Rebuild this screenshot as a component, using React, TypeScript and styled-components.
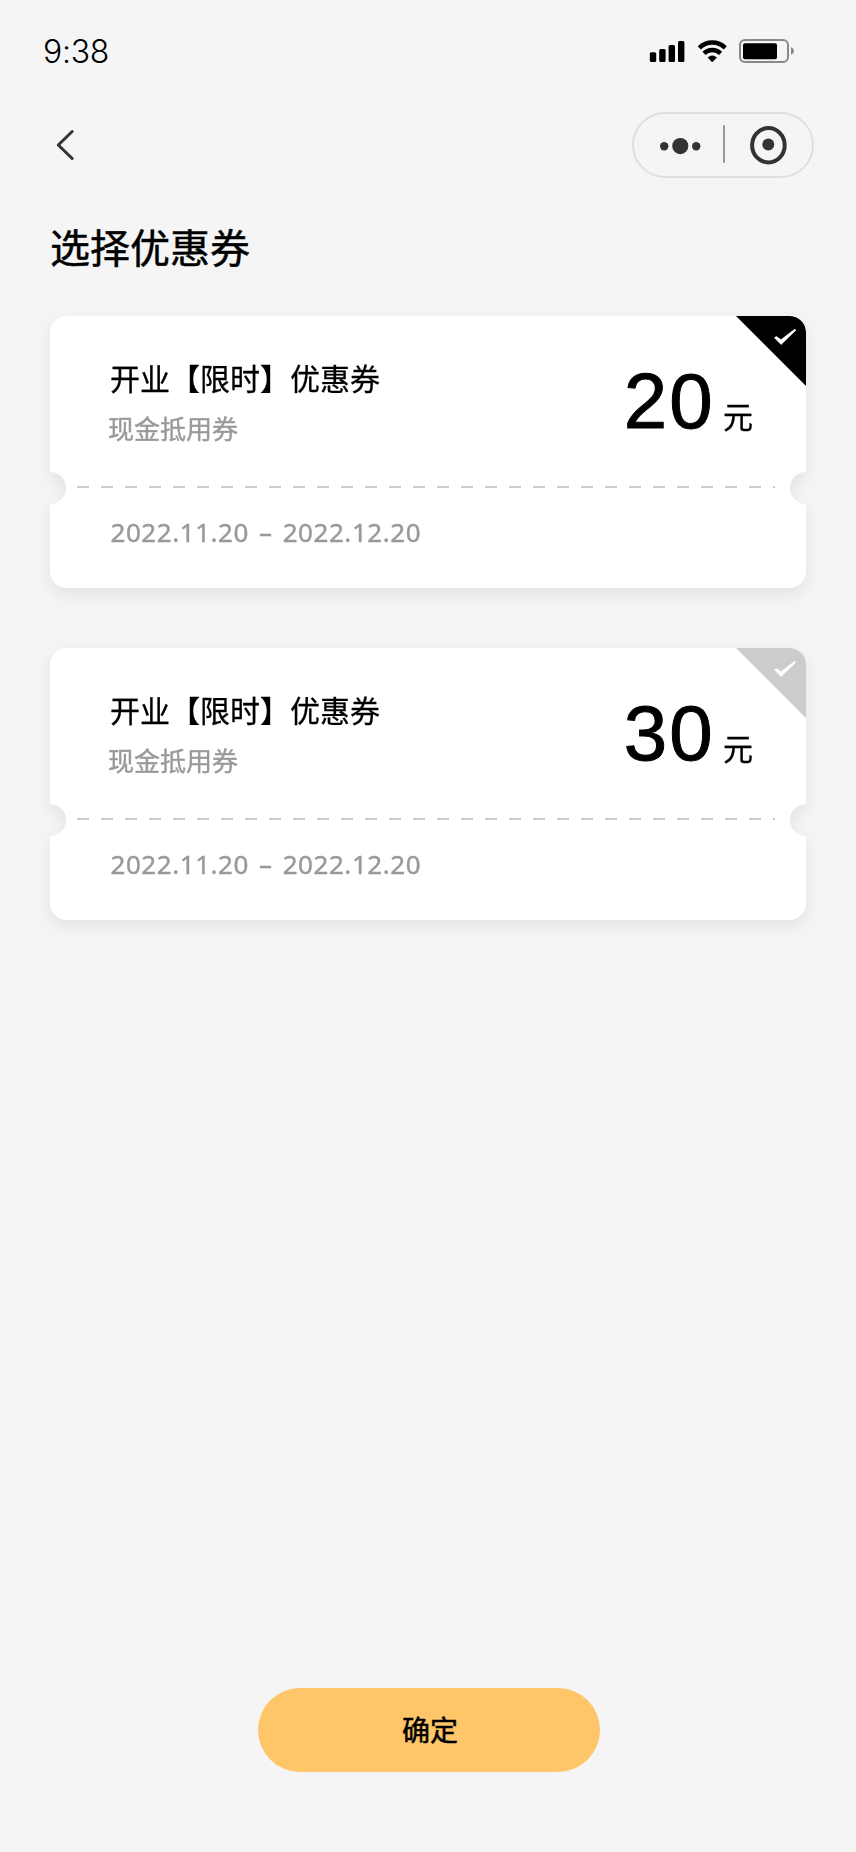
import React from "react";
import styled, { createGlobalStyle } from "styled-components";

const GlobalStyle = createGlobalStyle`
  * { box-sizing: border-box; }
  body { margin: 0; background: #f5f5f5; }
`;

const Screen = styled.main`
  display: flex;
  flex-direction: column;
  width: 856px;
  height: 1852px;
  background: #f5f5f5;
  color: #000;
  font-family: "Noto Sans CJK SC", sans-serif;
`;

const StatusBar = styled.header`
  display: flex;
  align-items: center;
  justify-content: space-between;
  height: 102px;
  padding: 0 61px 0 43px;
`;

const Clock = styled.span`
  padding-top: 1px;
  font: 300 32px/40px Inter, sans-serif;
  letter-spacing: -0.3px;
`;

const StatusIcons = styled.svg`
  display: block;
  width: 146px;
  height: 26px;
`;

const NavBar = styled.nav`
  display: flex;
  align-items: center;
  justify-content: space-between;
  height: 66px;
  margin-top: 10px;
  padding: 0 42px 0 50px;
`;

const BackButton = styled.button`
  display: grid;
  place-items: center;
  width: 32px;
  height: 40px;
  padding: 0;
  border: 0;
  background: none;
`;

const Capsule = styled.div`
  display: flex;
  align-items: center;
  width: 182px;
  height: 66px;
  border: 2px solid #dfdfdf;
  border-radius: 33px;
`;

const CapsuleIcons = styled.svg`
  display: block;
  width: 178px;
  height: 62px;
`;

const Heading = styled.h1`
  margin: 39px 0 0 50px;
  font-size: 40px;
  line-height: 58px;
  font-weight: 400;
  -webkit-text-stroke: 0.5px #000;
`;

const CouponList = styled.section`
  display: flex;
  flex-direction: column;
  gap: 60px;
  margin-top: 41px;
  padding: 0 50px;
`;

const Coupon = styled.article`
  filter: drop-shadow(0 6px 8px rgba(0, 0, 0, 0.08));
`;

const CouponFace = styled.div`
  position: relative;
  display: flex;
  flex-direction: column;
  height: 272px;
  border-radius: 16px;
  overflow: hidden;
  background: #fff;
  mask: radial-gradient(circle at 0 172px, transparent 15.5px, #000 16.5px) left / 50% 100% no-repeat,
    radial-gradient(circle at 100% 172px, transparent 15.5px, #000 16.5px) right / 50% 100% no-repeat;
`;

const CouponTop = styled.div`
  display: flex;
  justify-content: space-between;
  height: 170px;
  padding: 39px 53px 0 58px;
`;

const CouponTitle = styled.h2`
  margin: 0 0 0 2px;
  font-size: 30px;
  line-height: 44px;
  font-weight: 400;
  -webkit-text-stroke: 0.3px #000;
`;

const CouponKind = styled.p`
  margin: 10px 0 0;
  font-size: 26px;
  line-height: 38px;
  color: #999;
  -webkit-text-stroke: 0.4px #999;
`;

const Price = styled.div`
  display: flex;
  align-items: baseline;
  gap: 8px;
  height: 90px;
  padding-top: 1px;
`;

const Amount = styled.strong`
  font: 400 78px/90px "Liberation Sans", sans-serif;
  letter-spacing: 2.3px;
  -webkit-text-stroke: 1px #000;
`;

const Unit = styled.span`
  font-size: 30px;
  line-height: 44px;
  -webkit-text-stroke: 0.3px #000;
`;

const Divider = styled.div`
  height: 2px;
  margin: 0 31px 0 27px;
  background: repeating-linear-gradient(90deg, #ccc 0 12px, transparent 12px 24px);
`;

const Validity = styled.time`
  margin: 25px 0 0 60.5px;
  font: 400 26px/38px "Noto Sans", sans-serif;
  letter-spacing: 0.55px;
  word-spacing: 2.8px;
  color: #999;
  -webkit-text-stroke: 0.4px #999;
`;

const Corner = styled.svg<{ $selected: boolean }>`
  position: absolute;
  top: 0;
  right: 0;
  width: 70px;
  height: 70px;
  color: ${(p) => (p.$selected ? "#000" : "#ccc")};
`;

const ConfirmButton = styled.button`
  align-self: center;
  width: 342px;
  height: 84px;
  margin: auto 0 80px 2px;
  padding: 0 0 2px 2px;
  border: 0;
  border-radius: 42px;
  background: #ffc569;
  color: #000;
  font: 400 28px/40px "Noto Sans CJK SC", sans-serif;
  -webkit-text-stroke: 0.5px #000;
`;

const coupons = [
  { amount: 20, selected: true },
  { amount: 30, selected: false },
];

export default function App() {
  return (
    <Screen>
      <GlobalStyle />
      <StatusBar>
        <Clock>9:38</Clock>
        <StatusIcons viewBox="0 0 146 26">
          <rect x="0.8" y="14.2" width="6.4" height="9.8" rx="1.5" />
          <rect x="10.2" y="11" width="6.4" height="13" rx="1.5" />
          <rect x="19.6" y="7" width="6.4" height="17" rx="1.5" />
          <rect x="29" y="3" width="6.4" height="21" rx="1.5" />
          <g fill="none" stroke="#000" strokeWidth="4.4">
            <path d="M50.3 9.9a18.5 18.5 0 0 1 26 0" />
            <path d="M55 15.4a12 12 0 0 1 16.6 0" />
          </g>
          <path d="M59 19.6a6.8 6.8 0 0 1 8.6 0L63.3 24Z" stroke="#000" strokeWidth="0.6" strokeLinejoin="round" />
          <rect x="91" y="2" width="48" height="22" rx="5" fill="none" stroke="#888" strokeWidth="2" />
          <rect x="94" y="5.2" width="34" height="16" rx="2" />
          <path d="M142 9q3 1.5 3 4t-3 4Z" fill="#888" />
        </StatusIcons>
      </StatusBar>
      <NavBar>
        <BackButton aria-label="返回">
          <svg width="32" height="40" viewBox="0 0 32 40" fill="none" stroke="#333" strokeWidth="3" strokeLinecap="round" strokeLinejoin="round">
            <path d="M22.2 6.5 8.3 20l13.9 13.5" />
          </svg>
        </BackButton>
        <Capsule>
          <CapsuleIcons viewBox="0 0 178 62" fill="#333">
            <circle cx="30.2" cy="32.3" r="4.2" />
            <circle cx="46.3" cy="32.1" r="8.1" />
            <circle cx="62.2" cy="32.3" r="4.2" />
            <rect x="89" y="11" width="2" height="38" rx="1" fill="#999" />
            <ellipse cx="134.4" cy="31.2" rx="16.3" ry="17.2" fill="none" stroke="#333" strokeWidth="4" />
            <circle cx="134.3" cy="30.5" r="6" />
          </CapsuleIcons>
        </Capsule>
      </NavBar>
      <Heading>选择优惠券</Heading>
      <CouponList>
        {coupons.map(({ amount, selected }) => (
          <Coupon key={amount}>
            <CouponFace>
              <CouponTop>
                <div>
                  <CouponTitle>开业【限时】优惠券</CouponTitle>
                  <CouponKind>现金抵用券</CouponKind>
                </div>
                <Price>
                  <Amount>{amount}</Amount>
                  <Unit>元</Unit>
                </Price>
              </CouponTop>
              <Divider />
              <Validity>2022.11.20 – 2022.12.20</Validity>
              <Corner $selected={selected} viewBox="0 0 70 70">
                <path d="M0 0h70v70Z" fill="currentColor" />
                <path
                  d="m38.5 21.8 1.8-1.2 4.7 3.2 13.6-10.4 1.2.7-14.7 14.3Z"
                  fill="#fff"
                  stroke="#fff"
                  strokeWidth="0.8"
                  strokeLinejoin="round"
                />
              </Corner>
            </CouponFace>
          </Coupon>
        ))}
      </CouponList>
      <ConfirmButton>确定</ConfirmButton>
    </Screen>
  );
}
